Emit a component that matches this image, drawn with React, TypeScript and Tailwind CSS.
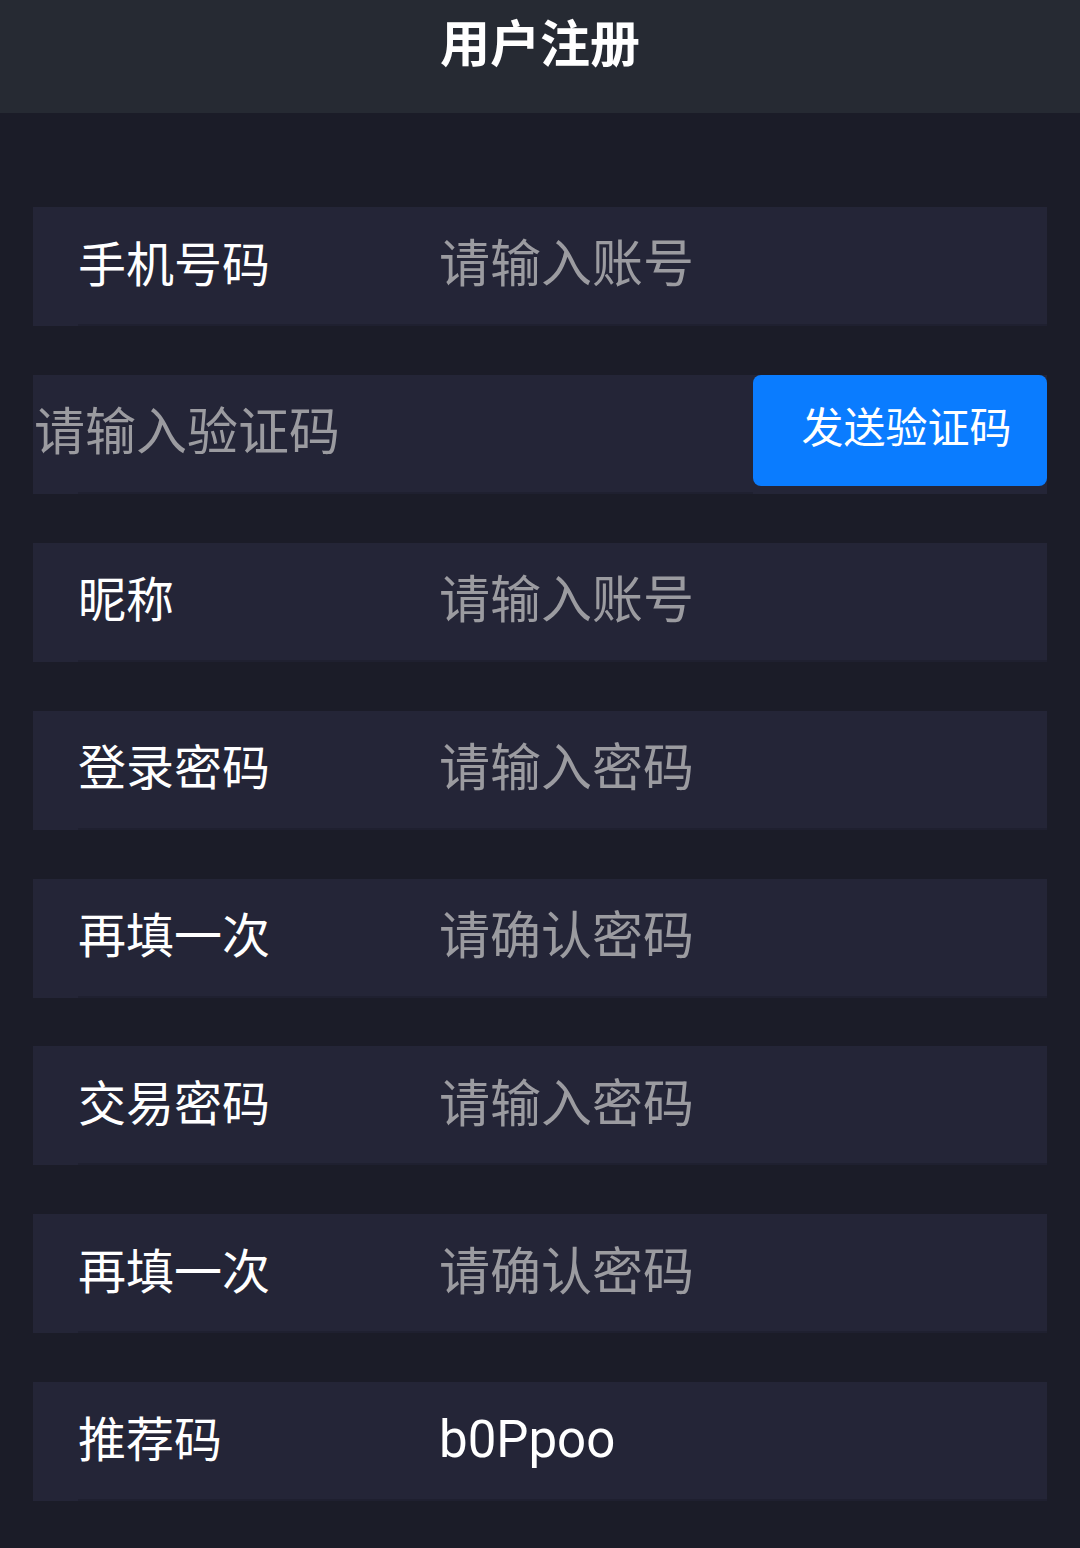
const rows = [
  { label: '手机号码', placeholder: '请输入账号' },
  { code: true },
  { label: '昵称', placeholder: '请输入账号' },
  { label: '登录密码', placeholder: '请输入密码' },
  { label: '再填一次', placeholder: '请确认密码' },
  { label: '交易密码', placeholder: '请输入密码' },
  { label: '再填一次', placeholder: '请确认密码' },
  { label: '推荐码', value: 'b0Ppoo' },
];

export default function App() {
  return (
    <div
      className="min-h-[1548px] w-[1080px] bg-[#1b1c28]"
      style={{ fontFamily: 'Roboto, "Noto Sans CJK SC", sans-serif' }}
    >
      <header className="flex h-[113px] items-start justify-center bg-[#262a33] pt-[14px]">
        <h1 className="text-[50px] font-bold leading-[62px] text-white">用户注册</h1>
      </header>

      <div className="flex flex-col gap-[48.9px] px-[33px] pt-[94px]">
        {rows.map((row, i) =>
          row.code ? (
            <div key={i} className="flex h-[119px] bg-[#242537]">
              <div className="flex flex-1 flex-col">
                <div className="flex flex-1 items-center pl-[1px] text-[51px] text-[#9b9ba0]">请输入验证码</div>
                <div className="ml-[45px] h-[2px] bg-[#1f2030]" />
              </div>
              <button className="mb-[8px] flex w-[294px] items-center justify-center rounded-[8px] bg-[#0a7cff] pb-[4px] pl-[13px] text-[42px] text-white">
                发送验证码
              </button>
            </div>
          ) : (
            <div key={i} className="flex h-[119px] flex-col bg-[#242537]">
              <div className="flex flex-1 items-center">
                <span className="w-[406px] pl-[45px] text-[48px] text-white">{row.label}</span>
                {row.value ? (
                  <span className="text-[51px] text-white">{row.value}</span>
                ) : (
                  <span className="text-[51px] text-[#9b9ba0]">{row.placeholder}</span>
                )}
              </div>
              <div className="ml-[45px] h-[2px] bg-[#1f2030]" />
            </div>
          )
        )}
      </div>
    </div>
  );
}
